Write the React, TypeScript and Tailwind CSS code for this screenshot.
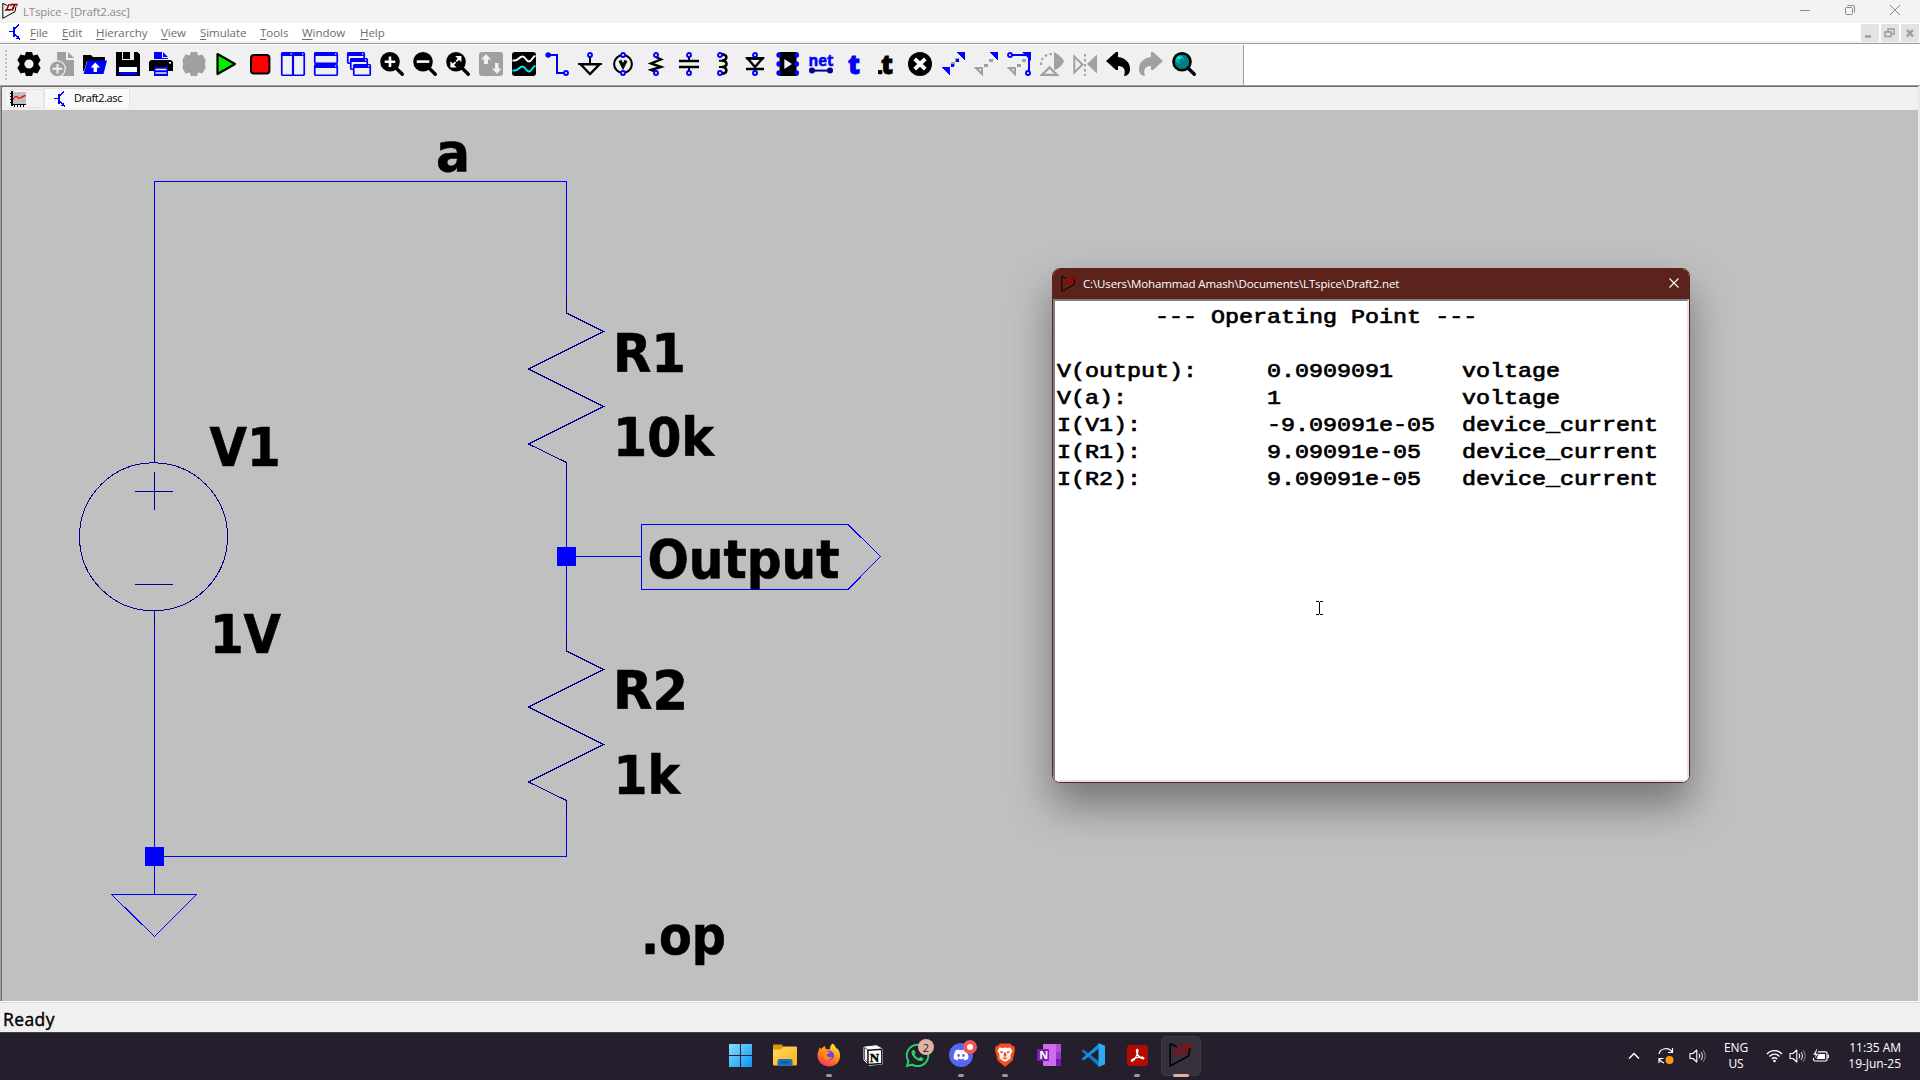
import React from "react";
import { FaDiscord, FaWhatsapp } from "react-icons/fa";

const BLUE = "#0000ff";
const GREY = "#a0a0a0";

function Ico({ children, crisp }: { children: React.ReactNode; crisp?: boolean }) {
  return (
    <svg width="24" height="24" viewBox="0 0 24 24" fill="none" shapeRendering={crisp ? "crispEdges" : "auto"} className="shrink-0 overflow-visible">
      {children}
    </svg>
  );
}

function Node({ x, y }: { x: number; y: number }) {
  return <circle cx={x} cy={y} r="2" fill="#f0f0f0" stroke={BLUE} strokeWidth="1.9" />;
}

function Lens({ children, dark = "#000" }: { children?: React.ReactNode; dark?: string }) {
  return (
    <Ico>
      <path d="M15.5 15.5L22.3 22.3" stroke={dark} strokeWidth="3.4" strokeLinecap="round" />
      <circle cx="10" cy="9.8" r="9.8" fill={dark} />
      {children}
    </Ico>
  );
}

function Pane({ x, y, w, h }: { x: number; y: number; w: number; h: number }) {
  return (
    <g>
      <rect x={x + 0.75} y={y + 0.75} width={w - 1.5} height={h - 1.5} rx="1" fill="#f0f0f0" stroke={BLUE} strokeWidth="1.7" />
      <rect x={x + 0.5} y={y + 0.5} width={w - 1} height="3.5" fill={BLUE} />
      <rect x={x + w - 3} y={y + 1.3} width="1.3" height="1.3" fill="#f0f0f0" />
    </g>
  );
}

const tools: React.ReactNode[] = [
  <Ico>
    <path fillRule="evenodd" fill="#000" d="M9 0H15L16.2 3.4L20.4 2.6L23.6 8L21.2 12L23.6 16L20.4 21.4L16.2 20.6L15 24H9L7.8 20.6L3.6 21.4L0.4 16L2.8 12L0.4 8L3.6 2.6L7.8 3.4ZM12 7.4A4.6 4.6 0 1 0 12 16.6A4.6 4.6 0 1 0 12 7.4Z" />
  </Ico>,
  <Ico>
    <path d="M7 0H16V8H24V24H7Z" fill={GREY} />
    <path d="M18 0L24 6H18Z" fill={GREY} />
    <circle cx="7.3" cy="16.8" r="8" fill={GREY} stroke="#f0f0f0" strokeWidth="1.2" />
    <path d="M7.5 12V21.6M2.7 16.8H12.3" stroke="#f0f0f0" strokeWidth="2" />
  </Ico>,
  <Ico>
    <path d="M0 3H8L10 5H22V9H4L1 19H0Z" fill="#000" />
    <path d="M4.5 8.5H24L20.5 22H0.5Z" fill={BLUE} />
    <path d="M12.3 10.5L17 15.5H14V20H10.6V15.5H7.6Z" fill="#fff" />
  </Ico>,
  <Ico crisp>
    <path d="M0 0H21L24 3V24H0Z" fill="#000" />
    <rect x="6" y="0" width="12" height="8" fill="#f0f0f0" />
    <rect x="7" y="0" width="7" height="7" fill="#000" />
    <rect x="3" y="15" width="18" height="5" fill="#fff" />
    <rect x="3" y="20" width="18" height="3" fill={BLUE} />
  </Ico>,
  <Ico>
    <path d="M5 0H13V6H19V7H5ZM14 0L19 5H14Z" fill={BLUE} />
    <path d="M2 8H22L24 10V19H19V15H5V19H0V10Z" fill="#000" />
    <rect x="20" y="10" width="2" height="1.6" fill="#fff" />
    <path d="M5 15H19V24H5Z" fill={BLUE} />
    <path d="M6.5 17.5H17.5M6.5 21H17.5" stroke="#f0f0f0" strokeWidth="1.5" />
  </Ico>,
  <Ico>
    <path fill={GREY} d="M9 0H15L16.2 3.4L20.4 2.6L23.6 8L23 12L23.6 16L20.4 21.4L16.2 20.6L15 24H9L7.8 20.6L3.6 21.4L0.4 16L1 12L0.4 8L3.6 2.6L7.8 3.4Z" />
  </Ico>,
  <Ico>
    <path d="M2.5 2L20 12L2.5 22Z" fill="#00f000" stroke="#000" strokeWidth="2.2" strokeLinejoin="round" />
  </Ico>,
  <Ico>
    <rect x="3" y="3" width="18.4" height="18.4" rx="3" fill="#f00" stroke="#000" strokeWidth="2" />
  </Ico>,
  <Ico>
    <Pane x={0} y={0} w={12.5} h={24} />
    <Pane x={11.5} y={0} w={12.5} h={24} />
  </Ico>,
  <Ico>
    <Pane x={0} y={0} w={24} h={12} />
    <Pane x={0} y={12} w={24} h={12} />
  </Ico>,
  <Ico>
    <Pane x={0} y={0} w={18} h={12} />
    <Pane x={3} y={6} w={18} h={12} />
    <Pane x={6} y={12} w={18} h={12} />
  </Ico>,
  <Lens>
    <path d="M10 4.5V15M4.7 9.8H15.3" stroke="#fff" strokeWidth="2.6" />
  </Lens>,
  <Lens>
    <path d="M3.7 9.6H16.3" stroke="#fff" strokeWidth="2.6" />
  </Lens>,
  <Lens>
    <path d="M6 13.6L14 5.6" stroke="#fff" strokeWidth="1.8" />
    <path d="M9.2 4H15.4V10.2ZM4.4 9.2V15.4H10.6Z" fill="#fff" />
    <path d="M8.6 8.4L11.6 11.4" stroke="#000" strokeWidth="1.2" />
  </Lens>,
  <Ico>
    <rect width="24" height="24" rx="3" fill={GREY} />
    <path d="M7 2L12 7.5H9V12H5V7.5H2ZM18 22L13 16.5H16V11H19.5V16.5H22.5Z" fill="#f0f0f0" />
  </Ico>,
  <Ico>
    <rect width="24" height="24" rx="3" fill="#000" />
    <path d="M0.5 8.5H3C6 8.5 7.5 4.5 10.5 4.5S14 9.5 17 9.5S20.5 4 23.5 4" stroke="#fff" strokeWidth="2" />
    <path d="M0.5 18.5H3C6 18.5 7.5 14.5 10.5 14.5S14 19.5 17 19.5S20.5 14 23.5 14" stroke="#00e8f0" strokeWidth="2" />
  </Ico>,
  <Ico>
    <path d="M3 3H12V21H19" stroke={BLUE} strokeWidth="2" />
    <circle cx="3.2" cy="3" r="2.8" fill={BLUE} />
    <Node x={21} y={21} />
  </Ico>,
  <Ico>
    <path d="M12 5V12M0 12H24" stroke="#000" strokeWidth="2" />
    <path d="M2.5 12.3L12 22L21.5 12.3Z" stroke="#000" strokeWidth="2.3" />
    <Node x={12} y={3} />
  </Ico>,
  <Ico>
    <circle cx="12" cy="12" r="8.9" stroke="#000" strokeWidth="2.1" />
    <path d="M9 8.5L12 14.6L15 8.5" stroke="#000" strokeWidth="3.2" />
    <Node x={12} y={3} />
    <Node x={12} y={21} />
  </Ico>,
  <Ico>
    <path d="M12 5L17 7.5L7 11.5L17 15L7 18L12 20" stroke="#000" strokeWidth="2.4" />
    <Node x={12} y={3} />
    <Node x={12} y={21} />
  </Ico>,
  <Ico>
    <path d="M12 4V9M12 15V20" stroke="#000" strokeWidth="2" />
    <path d="M2 9H22M2 15H22" stroke="#000" strokeWidth="2.6" />
    <Node x={12} y={3} />
    <Node x={12} y={21} />
  </Ico>,
  <Ico>
    <path d="M11 2.5C18 1.5 18 8.5 12 8.7C18 8.5 18 14.8 12 15C18 15 18 22.5 11 21.5" stroke="#000" strokeWidth="2.6" />
    <path d="M9 8.8H13M9 15H13" stroke="#000" strokeWidth="2" />
    <Node x={10} y={3} />
    <Node x={10} y={21} />
  </Ico>,
  <Ico>
    <path d="M12 4V8M12 17V20M3 6.2H21M3 17H21" stroke="#000" strokeWidth="2.4" />
    <path d="M4.6 6.5H19.4L12 15Z" stroke="#000" strokeWidth="2.4" />
    <Node x={12} y={3} />
    <Node x={12} y={21} />
  </Ico>,
  <Ico>
    <rect x="3.5" y="0" width="17" height="24" fill="#000" />
    <path d="M8.3 7V17L16 12Z" fill="#f0f0f0" />
    {[3, 12, 21].map((y) => (
      <g key={y} fill={BLUE}>
        <ellipse cx="2.6" cy={y} rx="2.2" ry="2.8" />
        <ellipse cx="20.8" cy={y} rx="2.2" ry="2.8" />
      </g>
    ))}
  </Ico>,
  <Ico>
    <text x="-0.5" y="14" fontSize="16" fontWeight="700" fontFamily="Open Sans, sans-serif" fill={BLUE} stroke={BLUE} strokeWidth="0.5" textLength="25" lengthAdjust="spacingAndGlyphs">net</text>
    <path d="M3 18.6H21" stroke="#000090" strokeWidth="2" />
    <circle cx="3" cy="18.6" r="3" fill="#000090" />
    <circle cx="21" cy="18.6" r="3" fill="#000090" />
  </Ico>,
  <Ico>
    <text x="6" y="21.8" fontSize="26" fontWeight="800" fontFamily="Open Sans, sans-serif" fill={BLUE} stroke={BLUE} strokeWidth="0.8" textLength="12" lengthAdjust="spacingAndGlyphs">t</text>
  </Ico>,
  <Ico>
    <rect x="3" y="18" width="4.3" height="4.3" rx="1" fill="#000" />
    <text x="6" y="21.8" fontSize="26" fontWeight="800" fontFamily="Open Sans, sans-serif" fill="#000" stroke="#000" strokeWidth="0.8" textLength="12" lengthAdjust="spacingAndGlyphs">t</text>
  </Ico>,
  <Ico>
    <circle cx="12" cy="12" r="12" fill="#000" />
    <path d="M6.8 6.8L17.2 17.2M17.2 6.8L6.8 17.2" stroke="#fff" strokeWidth="3.8" />
  </Ico>,
  <Ico crisp>
    <path d="M15 0H24V9ZM0 15H9V24Z" fill={BLUE} />
    <path d="M14 6h4v4h-4zM10 10h4v4h-4z" fill={GREY} />
    <path d="M15 7h3v3h-3zM10 12h3v3h-3z" fill={BLUE} />
  </Ico>,
  <Ico crisp>
    <path d="M15 0H24V9Z" fill={BLUE} />
    <path d="M2 16H8V22Z" stroke={GREY} strokeWidth="2" />
    <path d="M15 7h4v3h-4zM10 12h4v3h-4z" fill={GREY} />
  </Ico>,
  <Ico>
    <path d="M15 0H24V9Z" fill={BLUE} />
    <path d="M5 3H23M22 3V19" stroke={BLUE} strokeWidth="2" />
    <path d="M2 16H8V22Z" stroke={GREY} strokeWidth="2" />
    <path d="M15 7h4v3h-4zM10 12h4v3h-4z" fill={GREY} />
    <Node x={3} y={3} />
    <Node x={21} y={21} />
  </Ico>,
  <Ico>
    <path d="M14 0C20 3 23 7 24 9C22 14 18 17 14 18Z" fill={GREY} />
    <path d="M12 2C7 2 1 5 1 12V14" stroke={GREY} strokeWidth="2" strokeDasharray="2.5 2.5" />
    <path d="M2 22.8L9.5 15.4L17 22.8Z" stroke={GREY} strokeWidth="2.2" />
  </Ico>,
  <Ico>
    <path d="M1.3 4.5V20.5L9.5 12.5Z" stroke={GREY} strokeWidth="2" />
    <path d="M24 2.5V21.5L14 12Z" fill={GREY} />
    <path d="M12 2V24" stroke={GREY} strokeWidth="2" strokeDasharray="2.5 2.5" />
  </Ico>,
  <Ico>
    <path d="M0 9L10 0H12V5C20 6 24 11 24 17C24 21 22 24 18 24C20 18 18 14 12 14V18H10Z" fill="#000" />
  </Ico>,
  <Ico>
    <path d="M24 9L14 0H12V5C4 6 0 11 0 17C0 21 2 24 6 24C4 18 6 14 12 14V18H14Z" fill={GREY} />
  </Ico>,
  <Lens>
    <circle cx="10" cy="9.8" r="7.2" fill="#008080" />
    <circle cx="7.8" cy="7.6" r="3.8" fill="#00c8d0" />
    <circle cx="8.8" cy="8.6" r="2.6" fill="#008080" />
    <circle cx="7.3" cy="6.2" r="1.3" fill="#20f0f8" />
  </Lens>,
];

function LtLogo({ size, line = "#000", red = "#8b0000" }: { size: number; line?: string; red?: string }) {
  return (
    <svg width={size} height={size} viewBox="0 0 24 24" fill="none" className="shrink-0">
      <path d="M1.2 0.5V23L19.5 13L21 5M1.2 0.5L8 4" stroke={line} strokeWidth="1.5" />
      <path d="M9.5 1.5H12L8.5 9H12.5L14 7L13 11.5H3.5L5 9.5H6ZM12.5 1H24L22.5 5L21 3.5H20L16.5 11.5H13.5L17 3.5H15L12.5 5.5Z" fill={red} />
    </svg>
  );
}

function Transistor() {
  return (
    <svg width="11" height="16" viewBox="0 0 11 16" fill="none" shapeRendering="crispEdges" className="shrink-0">
      <path d="M4.5 2.5V12.5M5.5 2.5V12.5M0 7.5H5M5 5.5L9.5 1V0M5 9.5L10.5 15V16" stroke={BLUE} strokeWidth="1" />
      <path d="M10 11V15H6Z" fill={BLUE} />
    </svg>
  );
}

const menu: [string, string, string][] = [
  ["F", "ile", "w-8"],
  ["E", "dit", "w-[34px]"],
  ["H", "ierarchy", "w-[65px]"],
  ["V", "iew", "w-[39px]"],
  ["S", "imulate", "w-[60px]"],
  ["T", "ools", "w-[42px]"],
  ["W", "indow", "w-[58px]"],
  ["H", "elp", "w-10"],
];

function Label({ x, y, w, children }: { x: number; y: number; w: number; children: string }) {
  return (
    <text x={x} y={y} textLength={w} lengthAdjust="spacingAndGlyphs" fontSize="53.5" fontWeight="700" fill="#000" stroke="#000" strokeWidth="0.6" fontFamily="'DejaVu Sans Condensed', 'DejaVu Sans', sans-serif">
      {children}
    </text>
  );
}

function Resistor({ y }: { y: number }) {
  return (
    <path
      d={`M566.5 ${y - 19}V${y}L603.5 ${y + 18.5}L528.5 ${y + 56}L603.5 ${y + 93.5}L528.5 ${y + 131}L566.5 ${y + 149.5}V${y + 168}`}
      stroke="#000090"
    />
  );
}

/* Drawing area: its origin is the window's own, so the y offset is the height of the bars above it. */
function Schematic() {
  return (
    <svg width="1916" height="891" viewBox="2 110 1916 891" fill="none" strokeWidth="1" className="block">
      <g shapeRendering="crispEdges" stroke={BLUE}>
        <path d="M154.5 446V181.5H566.5V295M566.5 481V632M566.5 556.5H641.5M566.5 819V856.5H154.5M154.5 631V894.5" />
        <path d="M641.5 524.5H848L880.5 556.5L848 589.5H641.5Z" />
        <path d="M111.5 894.5H196.5L154.5 936.5Z" />
        <rect x="557" y="547" width="19" height="19" fill={BLUE} stroke="none" />
        <rect x="145" y="847" width="19" height="19" fill={BLUE} stroke="none" />
        <g stroke="#000090">
          <path d="M154.5 445V462M154.5 611V631M135 491.5H173M154.5 472V510M135 584.5H173" />
          <circle cx="153.5" cy="536.8" r="74" />
        </g>
        <Resistor y={313} />
        <Resistor y={651} />
      </g>
      <Label x={436} y={170.5} w={34}>a</Label>
      <Label x={209.5} y={466} w={71}>V1</Label>
      <Label x={210} y={653} w={71}>1V</Label>
      <Label x={613} y={371.5} w={73}>R1</Label>
      <Label x={613} y={456} w={101}>10k</Label>
      <Label x={647.5} y={577.5} w={192}>Output</Label>
      <Label x={613} y={709} w={75}>R2</Label>
      <Label x={613.5} y={794} w={66.5}>1k</Label>
      <Label x={641} y={953.5} w={85}>.op</Label>
    </svg>
  );
}

const rows: [string, string, string][] = [
  ["V(output):", "0.0909091", "voltage"],
  ["V(a):", "1", "voltage"],
  ["I(V1):", "-9.09091e-05", "device_current"],
  ["I(R1):", "9.09091e-05", "device_current"],
  ["I(R2):", "9.09091e-05", "device_current"],
];

function Mono({ children }: { children: string }) {
  return <span className="inline-block origin-left scale-x-[1.167] whitespace-pre [-webkit-text-stroke:0.7px_#000]">{children}</span>;
}

function ResultWindow() {
  return (
    <div className="absolute left-[1052px] top-[268px] flex h-[515px] w-[638px] flex-col overflow-hidden rounded-lg border border-[#5c231c] bg-white shadow-[0_22px_40px_1px_rgba(0,0,0,0.38)]">
      <div className="flex h-[30px] shrink-0 items-center bg-[#5c231c] pl-2 pr-[10px] text-white">
        <LtLogo size={16} red="#a00000" />
        <span className="-mt-px ml-[6px] flex-1 whitespace-nowrap text-[11.5px] tracking-[-0.13px]">C:\Users\Mohammad Amash\Documents\LTspice\Draft2.net</span>
        <svg width="10" height="10" viewBox="0 0 10 10" stroke="#fff" strokeWidth="1.1" className="-mt-[2px]">
          <path d="M0.5 0.5L9.5 9.5M9.5 0.5L0.5 9.5" />
        </svg>
      </div>
      <div className="flex-1 border-2 border-b-[#e3e3e3] border-l-[#808080] border-r-[#e3e3e3] border-t-[#808080] bg-white pl-[2px] font-['Liberation_Mono',monospace] text-[20px] leading-[27px] text-black">
        <div className="pl-[98px] pt-[3px]">
          <Mono>--- Operating Point ---</Mono>
        </div>
        <div className="h-[27px]" />
        {rows.map((r) => (
          <div key={r[0]} className="grid grid-cols-[210px_195px_1fr]">
            <Mono>{r[0]}</Mono>
            <Mono>{r[1]}</Mono>
            <Mono>{r[2]}</Mono>
          </div>
        ))}
      </div>
    </div>
  );
}

function Speaker() {
  return (
    <svg width="18" height="16" viewBox="0 0 18 16" fill="none" stroke="#fff" strokeWidth="1.1" className="shrink-0">
      <path d="M1 5.5H4L7.8 2V14L4 10.5H1Z" strokeLinejoin="round" />
      <path d="M10 5.8C11 7.2 11 8.8 10 10.2" />
      <path d="M12 4C13.8 6.5 13.8 9.5 12 12" opacity="0.8" />
      <path d="M14 2.2C16.8 5.8 16.8 10.2 14 13.8" opacity="0.4" />
    </svg>
  );
}

function Task({ children, run }: { children: React.ReactNode; run?: boolean }) {
  return (
    <div className="relative flex h-12 w-11 items-center justify-center">
      {children}
      {run && <span className="absolute bottom-[2px] left-[19px] h-[3px] w-[6px] rounded-full bg-[#9a959f]" />}
    </div>
  );
}

function Taskbar() {
  return (
    <div className="flex h-12 border-t border-[#45404c] bg-[#251f2d] text-white">
      <div className="flex w-[719px] shrink-0" />
      <div className="-mt-[2px] flex h-12">
        <Task>
          <svg width="23" height="23" viewBox="0 0 23 23" className="-ml-[2px]">
            <defs>
              <linearGradient id="win" x1="0" y1="0" x2="1" y2="1">
                <stop offset="0" stopColor="#84e0ff" />
                <stop offset="1" stopColor="#0c93f5" />
              </linearGradient>
            </defs>
            <path d="M0 0H11V11H0ZM12 0H23V11H12ZM0 12H11V23H0ZM12 12H23V23H12Z" fill="url(#win)" />
          </svg>
        </Task>
        <Task>
          <svg width="24" height="24" viewBox="0 0 24 24">
            <defs>
              <linearGradient id="fold" x1="0" y1="0" x2="1" y2="1">
                <stop offset="0" stopColor="#ffd966" />
                <stop offset="1" stopColor="#fbb414" />
              </linearGradient>
            </defs>
            <path d="M0 2.5Q0 1.5 1 1.5H8.5L11 4V8H0Z" fill="#d99a0a" />
            <path d="M0 6.5H8L11 3.5H23Q24 3.5 24 4.5V21.5Q24 22.5 23 22.5H1Q0 22.5 0 21.5Z" fill="url(#fold)" />
            <path d="M4.5 22.5V18Q4.5 16 6.5 16H17.5Q19.5 16 19.5 18V22.5Z" fill="#1274c4" />
            <path d="M8 19.5H16" stroke="#0a4f91" strokeWidth="1.5" />
          </svg>
        </Task>
        <Task run>
          <svg width="24" height="24" viewBox="0 0 24 24">
            <defs>
              <linearGradient id="fox" x1="0.8" y1="0" x2="0.3" y2="1">
                <stop offset="0" stopColor="#fff04a" />
                <stop offset="0.45" stopColor="#ff980e" />
                <stop offset="1" stopColor="#ff2f5c" />
              </linearGradient>
            </defs>
            <path d="M15.5 0.5C18 2 18.5 4 19 5C20 5.5 21 6 21.5 7C23.5 10 24 16 20.5 20C16 24.5 8 24.5 3.5 20C-0.5 15.5 0 10 2 7L2.5 4.5L4.5 6C5.5 4 7 3.5 8 3L8.5 6L13 6.5C12.5 4 14 2 15.5 0.5Z" fill="url(#fox)" />
            <circle cx="12" cy="12.5" r="5" fill="#7542e5" />
            <path d="M5 8.5L9 7.5L13 9C12 11 10 10.5 9.5 12C10.5 14.5 13.5 15 15.5 13.5C14 18 8 18 6.5 14C5.5 12 6 10 5 8.5Z" fill="#ff8a16" />
          </svg>
        </Task>
        <Task>
          <svg width="20" height="21" viewBox="0 0 20 21">
            <path d="M1 2.2L13.5 0.7L19.3 4V19L6 20.3L1 15Z" fill="#fff" stroke="#fff" strokeLinejoin="round" />
            <path d="M1.6 2.6L5 5V18L1.6 14.5Z" fill="#fff" stroke="#222" strokeWidth="0.8" />
            <path d="M5 5.2L18.8 4.3V18.5L5 19.5Z" fill="#fff" stroke="#111" strokeWidth="1.4" />
            <text x="6.7" y="16.6" fontSize="13" fontWeight="700" fontFamily="Liberation Serif, serif" fill="#000" stroke="#000" strokeWidth="0.4">N</text>
          </svg>
        </Task>
        <Task>
          <FaWhatsapp size={27} color="#25d366" className="mt-px" />
          <span className="absolute right-[5px] top-2 flex h-4 w-4 items-center justify-center rounded-full bg-[#dfb2a2] text-[11px] leading-none text-[#222]">2</span>
        </Task>
        <Task run>
          <span className="flex h-6 w-6 items-center justify-center rounded-full bg-[#5865f2]">
            <FaDiscord size={16} color="#fff" />
          </span>
          <span className="absolute left-6 top-[9px] h-[14px] w-[14px] rounded-full border-4 border-[#f0565a] bg-white" />
        </Task>
        <Task run>
          <svg width="20" height="24" viewBox="0 0 20 24">
            <path d="M5 0.5H15L17 2.5L19.5 3.5L20 7L17.5 17.5L10 24L2.5 17.5L0 7L0.5 3.5L3 2.5Z" fill="#fb4a1c" />
            <path d="M4.5 4.5L8 5L10 4.5L12 5L15.5 4.5L17.5 8L15.5 11.5V15.5L11 18.5H9L4.5 15.5V11.5L2.5 8Z" fill="#fff" />
            <path d="M5 8L8.5 8.8L7.5 10.5L5.5 9.5ZM15 8L11.5 8.8L12.5 10.5L14.5 9.5ZM9 9.5H11L11.5 13L10 14L8.5 13ZM7 15L10 14.3L13 15L10 16.5Z" fill="#fb4a1c" />
          </svg>
        </Task>
        <Task>
          <svg width="24" height="22" viewBox="0 0 24 22">
            <rect x="6" width="18" height="22" rx="1" fill="#cf6bee" />
            <rect x="19" y="0" width="5" height="7.5" fill="#b04fd6" />
            <rect x="19" y="7.5" width="5" height="7.5" fill="#9838c4" />
            <rect x="19" y="15" width="5" height="7" fill="#7719aa" />
            <rect y="5" width="12" height="12" rx="1" fill="#7a1fb0" />
            <text x="2.2" y="15" fontSize="11" fontWeight="700" fontFamily="Open Sans, sans-serif" fill="#fff">N</text>
          </svg>
        </Task>
        <Task>
          <svg width="24" height="24" viewBox="0 0 24 24">
            <path d="M0.5 8L2.5 6.5L18 18.5V23.5Z" fill="#0c7dc8" />
            <path d="M0.5 16L2.5 17.5L18 5.5V0.5Z" fill="#1490dd" />
            <path d="M17.5 0L24 2.8V21.2L17.5 24Z" fill="#2faaf2" />
          </svg>
        </Task>
        <Task run>
          <svg width="21" height="21" viewBox="0 0 21 21" fill="none">
            <rect width="21" height="21" rx="3.5" fill="#b30b00" />
            <path d="M9.8 4.5C11.5 3.5 11.3 8.5 8 13.5C5.5 17 4 16.5 4.5 15.3C5.5 13 17 10.5 16.8 13.3C16.5 15.3 9 11 9.5 5Z" stroke="#fff" strokeWidth="1.3" />
          </svg>
        </Task>
        <Task>
          <span className="absolute left-[2px] top-[5px] h-10 w-10 rounded-[5px] border border-[#403a47] bg-[#36303d]" />
          <span className="relative -mt-px">
            <LtLogo size={24} red="#8d0c10" />
          </span>
          <span className="absolute bottom-[2px] left-[14px] h-[3px] w-4 rounded-full bg-[#dfb2a2]" />
        </Task>
      </div>
      <div className="flex flex-1 items-center justify-end pb-px pr-[19px] text-[12px] leading-4">
        <svg width="12" height="8" viewBox="0 0 12 8" fill="none" stroke="#fff" strokeWidth="1.5" className="mr-[17px]">
          <path d="M1 6.5L6 1.5L11 6.5" />
        </svg>
        <svg width="18" height="18" viewBox="0 0 18 18" fill="none" stroke="#fff" strokeWidth="1.2" className="mr-[14px]">
          <path d="M2 7A7 6.5 0 0 1 15 5M15.5 1V5.5H11M2 16V11.5H6.5M2.5 12A7 6.5 0 0 0 7 16" />
          <circle cx="12.5" cy="13" r="4" fill="#ff9a10" stroke="none" />
        </svg>
        <Speaker />
        <div className="ml-[16px] w-[26px] text-center tracking-[-0.2px]">ENG US</div>
        <svg width="17" height="14" viewBox="0 0 17 14" fill="none" stroke="#fff" strokeWidth="1.4" className="ml-[17px]">
          <path d="M1 5C5 0.5 12 0.5 16 5M3.5 7.5C6.5 4.5 10.5 4.5 13.5 7.5M5.8 10C7.5 8.5 9.5 8.5 11.2 10" />
          <circle cx="8.5" cy="12" r="1.3" fill="#fff" stroke="none" />
        </svg>
        <div className="ml-[6px]">
          <Speaker />
        </div>
        <svg width="17" height="14" viewBox="0 0 17 14" fill="none" stroke="#fff" strokeWidth="1.2" className="ml-[5px] mr-px">
          <path d="M6 2.8H13.5Q15 2.8 15 4.3V10.5Q15 12 13.5 12H3Q1.500 12 1.500 10.5V9" />
          <path d="M16.3 5.5V9.3" />
          <path d="M6.5 5H13V10H4.5Z" fill="#fff" stroke="none" />
          <path d="M4.5 0L1 6H3.5L2.5 10L6.5 4.5H4L5.5 0Z" fill="#fff" stroke="#251f2d" strokeWidth="0.4" />
        </svg>
        <div className="ml-[15px] w-[56px] whitespace-nowrap tracking-[-0.05px]">
          <div className="flex justify-end">11:35 AM</div>
          <div className="flex justify-end">19-Jun-25</div>
        </div>
      </div>
    </div>
  );
}

export default function App() {
  return (
    <div className="relative flex h-[1080px] w-[1920px] flex-col overflow-hidden bg-[#f0f0f0] font-['Open_Sans',sans-serif]">
      <div className="flex h-[23px] shrink-0 items-center bg-[#f3f3f3] pl-[2px] pr-5">
        <div className="-mt-[2px]">
          <LtLogo size={16} />
        </div>
        <span className="ml-[5px] flex-1 text-[11.5px] tracking-[-0.2px] text-[#8c8c8c]">LTspice - [Draft2.asc]</span>
        <div className="-mt-[3px] flex items-center gap-[35px]">
          <svg width="10" height="10" viewBox="0 0 10 10" stroke="#8a8a8a" shapeRendering="crispEdges">
            <path d="M0 5.5H10" />
          </svg>
          <svg width="10" height="10" viewBox="0 0 10 10" fill="none" stroke="#8a8a8a">
            <rect x="0.5" y="2.5" width="7" height="7" rx="1" />
            <path d="M2.5 0.5H8Q9.500 0.5 9.5 2V7.5" />
          </svg>
          <svg width="10" height="10" viewBox="0 0 10 10" stroke="#8a8a8a">
            <path d="M0 0L10 10M10 0L0 10" />
          </svg>
        </div>
      </div>
      <div className="flex h-[20px] shrink-0 items-center border-b-2 border-[#f0f0f0] bg-white pl-[9px] text-[11.5px] leading-none tracking-[-0.05px] text-[#6d6d6d]">
        <Transistor />
        <div className="ml-[10px] mt-[2px] flex flex-1">
          {menu.map(([a, rest, w]) => (
            <span key={a + rest} className={w}>
              <span className="underline underline-offset-2">{a}</span>
              {rest}
            </span>
          ))}
        </div>
        <div className="mt-[2px] flex gap-[2px] pr-px">
          {["M4 12.5H10", "M4 8H10V12.5H4ZM7 8V5H13V10H10", "M6 6L12 12.5M12 6L6 12.5"].map((d, i) => (
            <svg key={i} width="18" height="18" viewBox="0 0 18 18" fill="none" stroke="#8fa0b0" strokeWidth={i === 1 ? "1.5" : "2.5"} className="bg-[#e3e3e3]">
              <path d={d} />
            </svg>
          ))}
        </div>
      </div>
      <div className="flex h-[42px] shrink-0 border-t border-[#a0a0a0] bg-white pt-px">
        <div className="flex w-[1244px] items-center border-r border-[#a0a0a0] bg-[#f0f0f0] pb-[2px] pl-[5px]">
          <div className="mr-[10px] mt-[2px] flex flex-col gap-[2px]">
            {Array.from({ length: 8 }, (_, i) => (
              <span key={i} className="h-[2px] w-[2px] bg-[#c0c0c0]" />
            ))}
          </div>
          <div className="flex gap-[9px]">
            {tools.map((t, i) => (
              <React.Fragment key={i}>{t}</React.Fragment>
            ))}
          </div>
        </div>
      </div>
      <div className="h-px shrink-0 bg-[#a0a0a0]" />
      <div className="flex min-h-0 flex-1 flex-col border-b border-l border-r-2 border-b-[#e3e3e3] border-l-[#a0a0a0] border-r-[#e8e8e8]">
        <div className="flex flex-1 flex-col border-l border-t border-[#696969]">
          <div className="flex h-[23px] shrink-0 items-start pl-[2px] pt-px">
            <div className="mt-px flex h-[19px] w-10 items-center border border-[#e6e6e6] bg-[#f3f3f3] pl-[5px]">
              <svg width="16" height="16" viewBox="0 0 16 16" fill="none">
                <rect x="2" y="1" width="14" height="13" fill="#c0c0c0" />
                <path d="M1.500 0V15M2.500 0V15M1 13.5H16M0 2.5H1M0 5.5H1M0 8.5H1M0 11.5H1M4.5 14V16M7.5 14V16M10.5 14V16M13.5 14V16" stroke="#000" shapeRendering="crispEdges" />
                <path d="M3 8.5C5.5 4 6.5 5 8.5 7C11 8 12 5 15.5 4.5" stroke="#f00" strokeWidth="1.3" />
              </svg>
            </div>
            <div className="flex h-5 w-[86px] items-center border border-b-0 border-[#e3e3e3] bg-[#fafafa] pl-[9px]">
              <Transistor />
              <span className="ml-[9px] whitespace-nowrap text-[11px] tracking-[-0.4px] text-black">Draft2.asc</span>
            </div>
          </div>
          <div className="h-[891px] bg-[#c0c0c0]">
            <Schematic />
          </div>
        </div>
      </div>
      <div className="flex h-[30px] shrink-0 items-center border-t border-[#d7d7d7] pl-[3px] pt-[4px] text-[17.5px] tracking-[0.4px] text-black shadow-[0_-1px_0_#fff]">
        <span className="[-webkit-text-stroke:0.4px_#000]">Ready</span>
      </div>
      <Taskbar />
      <ResultWindow />
      <svg width="9" height="16" viewBox="0 0 9 16" fill="none" stroke="#000" shapeRendering="crispEdges" className="absolute left-[1315px] top-[600px]">
        <path d="M1 1.5H4M5 1.5H8M4.5 2V14M1 14.5H4M5 14.5H8" />
      </svg>
    </div>
  );
}
